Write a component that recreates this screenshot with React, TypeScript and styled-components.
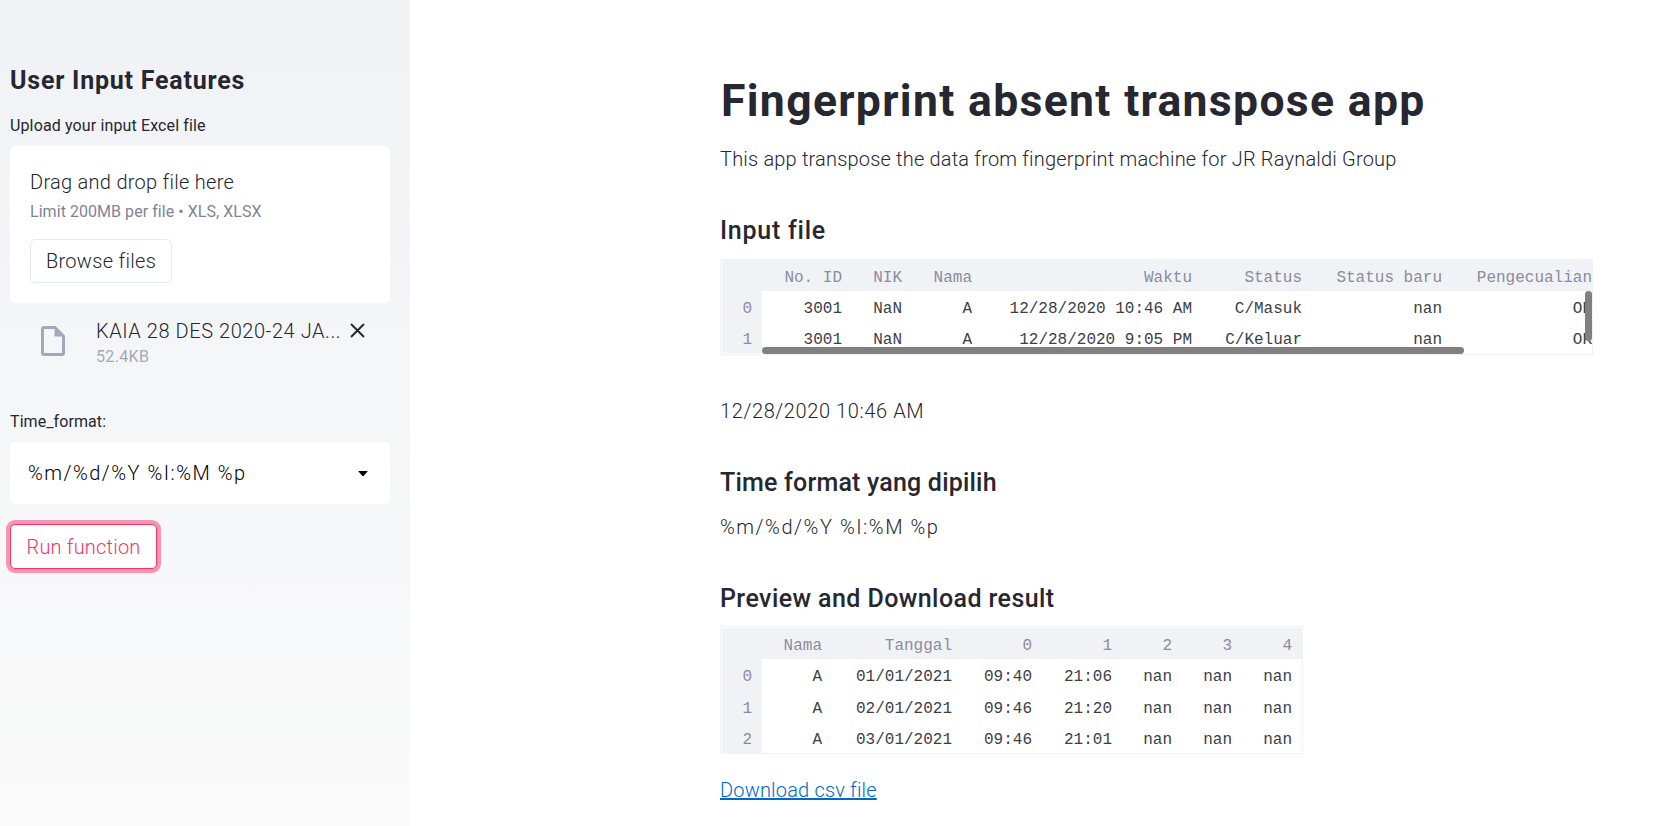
import React from "react";
import styled, { createGlobalStyle } from "styled-components";

const GlobalStyle = createGlobalStyle`
  * { box-sizing: border-box; }
  body {
    margin: 0;
    background: #fff;
    color: #262730;
    font-family: Roboto, "Liberation Sans", sans-serif;
    font-size: 20px;
    font-weight: 300;
    overflow: hidden;
  }
`;

const Page = styled.div`
  display: flex;
  height: 826px;
`;

const Sidebar = styled.aside`
  width: 410px;
  flex: none;
  padding: 66px 20px 0 10px;
  background: linear-gradient(#f0f2f6, #fafafa);
`;

const Main = styled.main`
  flex: 1;
  min-width: 0;
  padding: 74px 63px 0 310px;
`;

const Title = styled.h1`
  margin: 0 0 15px;
  padding-left: 1px;
  font-size: 44.5px;
  font-weight: 700;
  line-height: 54px;
  letter-spacing: 1.33px;
  white-space: nowrap;
`;

const SidebarTitle = styled.h2`
  margin: 0 0 18px;
  font-size: 25px;
  font-weight: 700;
  line-height: 30px;
  letter-spacing: 0.78px;
`;

const Heading = styled.h3<{ $spacing: number; $gap?: number }>`
  margin: 41px 0 ${(p) => p.$gap ?? 13}px;
  font-size: 25px;
  font-weight: 500;
  line-height: 30px;
  letter-spacing: ${(p) => p.$spacing}px;
`;

const Text = styled.p<{ $spacing: number }>`
  margin: 0;
  line-height: 32px;
  letter-spacing: ${(p) => p.$spacing}px;
  white-space: nowrap;
`;

const Label = styled.label<{ $spacing: number }>`
  display: block;
  margin-bottom: 8px;
  font-size: 16px;
  font-weight: 400;
  line-height: 24px;
  letter-spacing: ${(p) => p.$spacing}px;
`;

const Dropzone = styled.section`
  height: 157px;
  margin-top: 8px;
  padding: 20px;
  border-radius: 5px;
  background: #fff;
`;

const Hint = styled.div`
  margin: 2px 0 15px;
  font-size: 16px;
  font-weight: 400;
  line-height: 24px;
  letter-spacing: 0.05px;
  color: #808495;
`;

const Button = styled.button<{ $active?: boolean }>`
  display: block;
  width: ${(p) => (p.$active ? 147 : 142)}px;
  height: ${(p) => (p.$active ? 45 : 44)}px;
  padding: 0;
  border: 1px solid ${(p) => (p.$active ? "#f63366" : "#e6eaf1")};
  border-radius: 5px;
  background: #fff;
  color: ${(p) => (p.$active ? "#f63366" : "#262730")};
  box-shadow: ${(p) => (p.$active ? "0 0 0 4px rgba(246, 51, 102, 0.5)" : "none")};
  font: inherit;
  letter-spacing: ${(p) => (p.$active ? 0.2 : 0.3)}px;
`;

const FileRow = styled.div`
  display: flex;
  height: 107px;
  padding: 14px 20px 0 31px;
`;

const FileIcon = styled.svg`
  flex: none;
  width: 24px;
  height: 30px;
  margin-top: 9px;
`;

const FileInfo = styled.div`
  flex: 1;
  min-width: 0;
  padding-left: 31px;
  white-space: nowrap;
`;

const FileName = styled.div`
  line-height: 29px;
  letter-spacing: 0.56px;
`;

const FileSize = styled.div`
  font-size: 16px;
  font-weight: 400;
  line-height: 22px;
  letter-spacing: 0.35px;
  color: #a3a8b8;
`;

const CloseIcon = styled.svg`
  flex: none;
  width: 15px;
  height: 15px;
  margin: 6px 5px 0 0;
`;

const Select = styled.div`
  display: flex;
  align-items: center;
  justify-content: space-between;
  height: 62px;
  margin-bottom: 20px;
  padding: 0 22px 0 18px;
  border-radius: 5px;
  background: #fff;
  color: #000;
  letter-spacing: 1.5px;
`;

const Frame = styled.div<{ $w: number; $h: number; $top: number; $after: number }>`
  position: relative;
  width: ${(p) => p.$w}px;
  height: ${(p) => p.$h}px;
  margin-bottom: ${(p) => p.$after}px;
  padding: ${(p) => p.$top}px 0 0 1px;
  border: 1px solid #f0f2f6;
  overflow: hidden;
`;

const Grid = styled.div<{ $cols: string; $rowHeight: number }>`
  display: grid;
  grid-template-columns: ${(p) => p.$cols};
  grid-auto-rows: ${(p) => p.$rowHeight}px;
  font: 400 16px/36px "Liberation Mono", monospace;
`;

const Cell = styled.div<{ $muted: boolean }>`
  height: 100%;
  padding-right: 10px;
  text-align: right;
  white-space: pre;
  overflow: hidden;
  background: ${(p) => (p.$muted ? "#f0f2f6" : "#fff")};
  color: ${(p) => (p.$muted ? "#8a8c9c" : "#3c3d47")};
`;

const HorizontalThumb = styled.div`
  position: absolute;
  left: 41px;
  bottom: 0;
  width: 702px;
  height: 7px;
  border-radius: 4px;
  background: #808080;
`;

const VerticalThumb = styled.div`
  position: absolute;
  right: 0;
  top: 31px;
  width: 7px;
  height: 50px;
  border-radius: 4px;
  background: #808080;
`;

const Link = styled.a`
  display: inline-block;
  line-height: 32px;
  letter-spacing: 0.18px;
  color: #0068c9;
  text-decoration: underline;
  text-decoration-thickness: 2px;
  text-underline-offset: 1px;
  text-decoration-skip-ink: none;
`;

type TableProps = {
  cols: string;
  rowHeight: number;
  header: string[];
  rows: string[][];
};

function DataGrid({ cols, rowHeight, header, rows }: TableProps) {
  return (
    <Grid $cols={cols} $rowHeight={rowHeight}>
      {[header, ...rows].map((row, r) =>
        row.map((value, c) => (
          <Cell key={`${r}-${c}`} $muted={r === 0 || c === 0}>
            {value}
          </Cell>
        ))
      )}
    </Grid>
  );
}

const inputHeader = ["", "No. ID", "NIK", "Nama", "Waktu", "Status", "Status baru", "Pengecualian"];
const inputRows = [
  ["0", "3001", "NaN", "A", "12/28/2020 10:46 AM", "C/Masuk", "nan", "OK"],
  ["1", "3001", "NaN", "A", "12/28/2020 9:05 PM", "C/Keluar", "nan", "OK"],
];

const resultHeader = ["", "Nama", "Tanggal", "0", "1", "2", "3", "4"];
const resultRows = [
  ["0", "A", "01/01/2021", "09:40", "21:06", "nan", "nan", "nan"],
  ["1", "A", "02/01/2021", "09:46", "21:20", "nan", "nan", "nan"],
  ["2", "A", "03/01/2021", "09:46", "21:01", "nan", "nan", "nan"],
];

export default function App() {
  return (
    <Page>
      <GlobalStyle />
      <Sidebar>
        <SidebarTitle>User Input Features</SidebarTitle>
        <Label $spacing={0.13}>Upload your input Excel file</Label>
        <Dropzone>
          <Text $spacing={0.28}>Drag and drop file here</Text>
          <Hint>Limit 200MB per file • XLS, XLSX</Hint>
          <Button>Browse files</Button>
        </Dropzone>
        <FileRow>
          <FileIcon viewBox="0 0 24 30">
            <path
              fillRule="evenodd"
              fill="#a3a8b8"
              d="M3 0h11.5L24 9.5V27a3 3 0 0 1-3 3H3a3 3 0 0 1-3-3V3a3 3 0 0 1 3-3zm0 3v24h18V10.5h-7.5V3z"
            />
          </FileIcon>
          <FileInfo>
            <FileName>KAIA 28 DES 2020-24 JA...</FileName>
            <FileSize>52.4KB</FileSize>
          </FileInfo>
          <CloseIcon viewBox="0 0 15 15">
            <path d="M1 1l13 13M14 1L1 14" stroke="#262730" strokeWidth="1.9" />
          </CloseIcon>
        </FileRow>
        <Label $spacing={0.08}>Time_format:</Label>
        <Select>
          <span>%m/%d/%Y %I:%M %p</span>
          <svg width="10" height="5" viewBox="0 0 10 5">
            <path d="M0.8 0h8.4q.8 0 .3.6L6 4.5q-1 1-2 0L.5.6Q0 0 .8 0z" fill="#000" />
          </svg>
        </Select>
        <Button $active>Run function</Button>
      </Sidebar>
      <Main>
        <Title>Fingerprint absent transpose app</Title>
        <Text $spacing={0.19}>
          This app transpose the data from fingerprint machine for JR Raynaldi Group
        </Text>
        <Heading $spacing={0.75}>Input file</Heading>
        <Frame $w={873} $h={96} $top={0} $after={40}>
          <DataGrid
            cols="40px 90px 60px 70px 220px 110px 140px 150px"
            rowHeight={31}
            header={inputHeader}
            rows={inputRows}
          />
          <HorizontalThumb />
          <VerticalThumb />
        </Frame>
        <Text $spacing={0.6}>12/28/2020 10:46 AM</Text>
        <Heading $spacing={0.2}>Time format yang dipilih</Heading>
        <Text $spacing={1.55}>%m/%d/%Y %I:%M %p</Text>
        <Heading $spacing={0.42} $gap={12}>Preview and Download result</Heading>
        <Frame $w={583} $h={128} $top={1} $after={20}>
          <DataGrid
            cols="40px 70px 130px 80px 80px 60px 60px 60px"
            rowHeight={31.25}
            header={resultHeader}
            rows={resultRows}
          />
        </Frame>
        <Link href="#">Download csv file</Link>
      </Main>
    </Page>
  );
}
